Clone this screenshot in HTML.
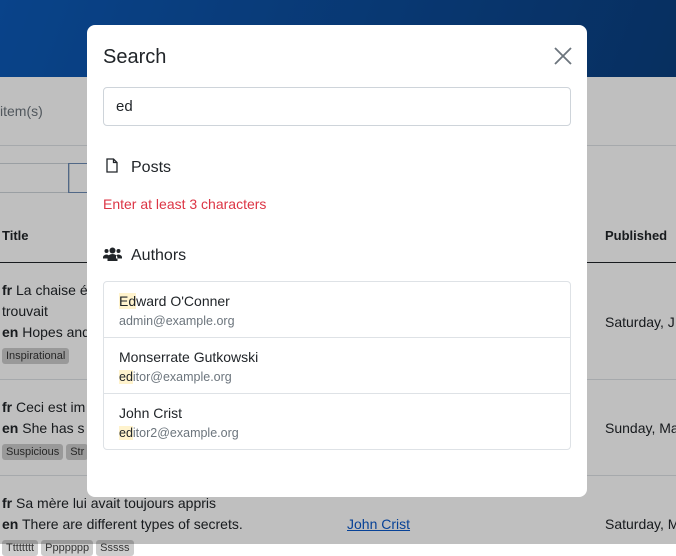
<!DOCTYPE html><html><head><style>
*{box-sizing:border-box;margin:0;padding:0}
body{width:676px;height:544px;overflow:hidden;position:relative;font-family:"Liberation Sans",sans-serif;background:#fff;color:#212529}
.bg{position:absolute;inset:0}
.hdr{position:absolute;left:0;top:0;width:676px;height:77px;background:linear-gradient(110deg,#0d5ab8,#0a3f80)}
.t{position:absolute;font-size:14px;white-space:nowrap}
.line{position:absolute;left:0;width:676px;height:1px;background:#dee2e6}
.tag{display:inline-block;background:#cdcdcd;color:#333;font-size:11px;padding:2px 4px;border-radius:3px;margin-right:3px}
.ov{position:absolute;inset:0;background:rgba(0,0,0,.25)}
.modal{position:absolute;left:87px;top:25px;width:500px;height:472px;background:#fff;border-radius:8px}
.hl{background:#fff3cd}
</style></head><body>
<div class="bg">
<div class="hdr"></div>
<div class="t" style="left:0;top:103px;color:#6c757d">item(s)</div>
<div class="line" style="top:145px"></div>
<div style="position:absolute;left:-2px;top:163px;width:72px;height:30px;border:1px solid #ced4da"></div>
<div style="position:absolute;left:68px;top:163px;width:40px;height:30px;border:1px solid #6c8bb5"></div>
<div class="t" style="left:2px;top:228px;font-weight:bold;font-size:13px">Title</div>
<div class="t" style="left:605px;top:228px;font-weight:bold;font-size:13px">Published</div>
<div class="line" style="top:262px;background:#212529"></div>
<div class="t" style="left:2px;top:282px"><b>fr</b> La chaise é</div>
<div class="t" style="left:2px;top:303px">trouvait</div>
<div class="t" style="left:2px;top:324px"><b>en</b> Hopes and</div>
<div class="t" style="left:2px;top:346px"><span class="tag">Inspirational</span></div>
<div class="t" style="left:605px;top:314px">Saturday, J</div>
<div class="line" style="top:379px"></div>
<div class="t" style="left:2px;top:399px"><b>fr</b> Ceci est im</div>
<div class="t" style="left:2px;top:420px"><b>en</b> She has s</div>
<div class="t" style="left:2px;top:442px"><span class="tag">Suspicious</span><span class="tag">Str</span></div>
<div class="t" style="left:605px;top:420px">Sunday, Ma</div>
<div class="line" style="top:475px"></div>
<div class="t" style="left:2px;top:495px"><b>fr</b> Sa mère lui avait toujours appris</div>
<div class="t" style="left:2px;top:516px"><b>en</b> There are different types of secrets.</div>
<div class="t" style="left:347px;top:516px;color:#0a58ca;text-decoration:underline">John Crist</div>
<div class="t" style="left:605px;top:516px">Saturday, M</div>
<div class="t" style="left:2px;top:538px"><span class="tag">Tttttttt</span><span class="tag">Ppppppp</span><span class="tag">Sssss</span></div>
</div>
<div class="ov"></div>
<div class="modal">
<div class="t" style="left:16px;top:21px;font-size:20px;font-weight:500">Search</div>
<svg style="position:absolute;left:467px;top:22px" width="18" height="18" viewBox="0 0 18 18"><path d="M1 1L17 17M17 1L1 17" stroke="#6c757d" stroke-width="1.8"/></svg>
<div style="position:absolute;left:16px;top:62px;width:468px;height:39px;border:1px solid #ced4da;border-radius:4px"></div>
<div class="t" style="left:29px;top:73px;font-size:15px">ed</div>
<svg style="position:absolute;left:19px;top:133px" width="12" height="15" viewBox="0 0 12 15"><path d="M1 1H7.5L11 4.5V14H1Z M7.5 1V4.5H11" fill="none" stroke="#212529" stroke-width="1.3"/></svg>
<div class="t" style="left:44px;top:134px;font-size:16px">Posts</div>
<div class="t" style="left:16px;top:171px;color:#dc3545">Enter at least 3 characters</div>
<svg style="position:absolute;left:16px;top:222px" width="19" height="14" viewBox="0 0 19 14"><circle cx="9.5" cy="3.5" r="3" fill="#212529"/><circle cx="3.5" cy="4" r="2" fill="#212529"/><circle cx="15.5" cy="4" r="2" fill="#212529"/><path d="M4.5 14V11a5 4 0 0110 0V14Z M0 11a3.5 3 0 016 -2.5V11.5H0Z M19 11a3.5 3 0 00-6 -2.5V11.5H19Z" fill="#212529"/></svg>
<div class="t" style="left:44px;top:222px;font-size:16px">Authors</div>
<div style="position:absolute;left:16px;top:256px;width:468px;height:169px;border:1px solid #dee2e6;border-radius:4px"></div>
<div style="position:absolute;left:17px;top:312px;width:466px;height:1px;background:#dee2e6"></div>
<div style="position:absolute;left:17px;top:368px;width:466px;height:1px;background:#dee2e6"></div>
<div class="t" style="left:32px;top:268px"><span class="hl">Ed</span>ward O'Conner</div>
<div class="t" style="left:32px;top:289px;font-size:12.5px;color:#6c757d">admin@example.org</div>
<div class="t" style="left:32px;top:324px">Monserrate Gutkowski</div>
<div class="t" style="left:32px;top:345px;font-size:12.5px;color:#6c757d"><span class="hl" style="color:#212529">ed</span>itor@example.org</div>
<div class="t" style="left:32px;top:380px">John Crist</div>
<div class="t" style="left:32px;top:401px;font-size:12.5px;color:#6c757d"><span class="hl" style="color:#212529">ed</span>itor2@example.org</div>
</div>
</body></html>
